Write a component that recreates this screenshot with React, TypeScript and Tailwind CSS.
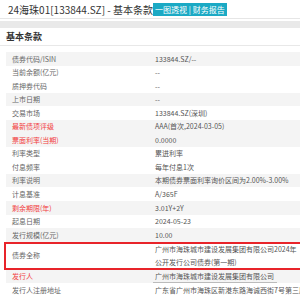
import React from "react";

type Row = {
  label: string;
  value: React.ReactNode;
  red?: boolean;
  gray?: boolean;
};

const rows: Row[] = [
  { label: "债券代码/ISIN", value: "133844.SZ/--", gray: true },
  { label: "当前余额(亿元)", value: "--" },
  { label: "质押券代码", value: "--" },
  { label: "上市日期", value: "--", gray: true },
  { label: "交易市场", value: "133844.SZ(深圳)" },
  { label: "最新债项评级", value: "AAA(首次,2024-03-05)", red: true, gray: true },
  { label: "票面利率(当期)", value: "0.0000", red: true, gray: true },
  { label: "利率类型", value: "累进利率" },
  { label: "付息频率", value: "每年付息1次" },
  { label: "利率说明", value: "本期债券票面利率询价区间为2.00%-3.00%", gray: true },
  { label: "计息基准", value: "A/365F" },
  { label: "剩余期限(年)", value: "3.01Y+2Y", red: true, gray: true },
  { label: "起息日期", value: "2024-05-23" },
  { label: "发行规模(亿元)", value: "10.00", gray: true },
];

function Line({ row }: { row: Row }) {
  return (
    <div className={`flex h-[13.55px] items-center ${row.gray ? "bg-[#f4f4f4]" : "bg-white"}`}>
      <div className={`w-[146px] shrink-0 pl-[6px] ${row.red ? "text-[#f23d3d]" : "text-[#666]"}`}>{row.label}</div>
      <div className="flex-1 whitespace-nowrap pl-[3px] text-[#555]">{row.value}</div>
    </div>
  );
}

export default function App() {
  return (
    <div className="h-[300px] w-[300px] overflow-hidden bg-white" style={{ fontFamily: '"Noto Sans CJK SC", "Noto Sans", sans-serif' }}>
      <div className="flex h-[18px] items-center px-[8px]">
        <span className="w-[145px] shrink-0 whitespace-nowrap text-[10px] text-[#333]">24海珠01[133844.SZ] - 基本条款</span>
        <span className="whitespace-nowrap bg-[#1ba9c4] px-[2px] text-[8px] leading-[13px] text-white">一图透视 | 财务报告</span>
      </div>
      <div className="border-t border-[#e6e6e6] pt-[2px]">
        <div className="h-[7px] bg-[#e9e9e9]" />
      </div>
      <div className="flex h-[18px] items-center border-b border-[#e8e8e8] px-[6px]">
        <span className="text-[9px] font-bold text-[#333]">基本条款</span>
      </div>
      <div className="ml-[6px] mt-[6px] whitespace-nowrap text-[7px]">
        {rows.map((r) => (
          <Line key={r.label} row={r} />
        ))}
        <div className="relative flex h-[28px] items-center bg-white">
          <div className="w-[146px] shrink-0 pl-[6px] text-[#666]">债券全称</div>
          <div className="flex-1 pl-[3px] leading-[13px] text-[#555]">
            <div>广州市海珠城市建设发展集团有限公司2024年</div>
            <div>公开发行公司债券(第一期)</div>
          </div>
          <div className="absolute -left-[2px] -right-[4px] top-0 bottom-0 border-2 border-[#e8242a]" />
        </div>
        <div className="flex h-[13.55px] items-center bg-[#f4f4f4]">
          <div className="w-[146px] shrink-0 pl-[6px] text-[#f23d3d]">发行人</div>
          <div className="pl-[1px] text-[#555]">
            <span className="border-b border-[#bbb] pl-[2px] pr-[3px] pb-[1px]">广州市海珠城市建设发展集团有限公司</span>
          </div>
        </div>
        <div className="flex h-[13.55px] items-center bg-white">
          <div className="w-[146px] shrink-0 pl-[6px] text-[#666]">发行人注册地址</div>
          <div className="pl-[3px] text-[#555]">广东省广州市海珠区新港东路海诚西街7号第三层</div>
        </div>
      </div>
    </div>
  );
}
